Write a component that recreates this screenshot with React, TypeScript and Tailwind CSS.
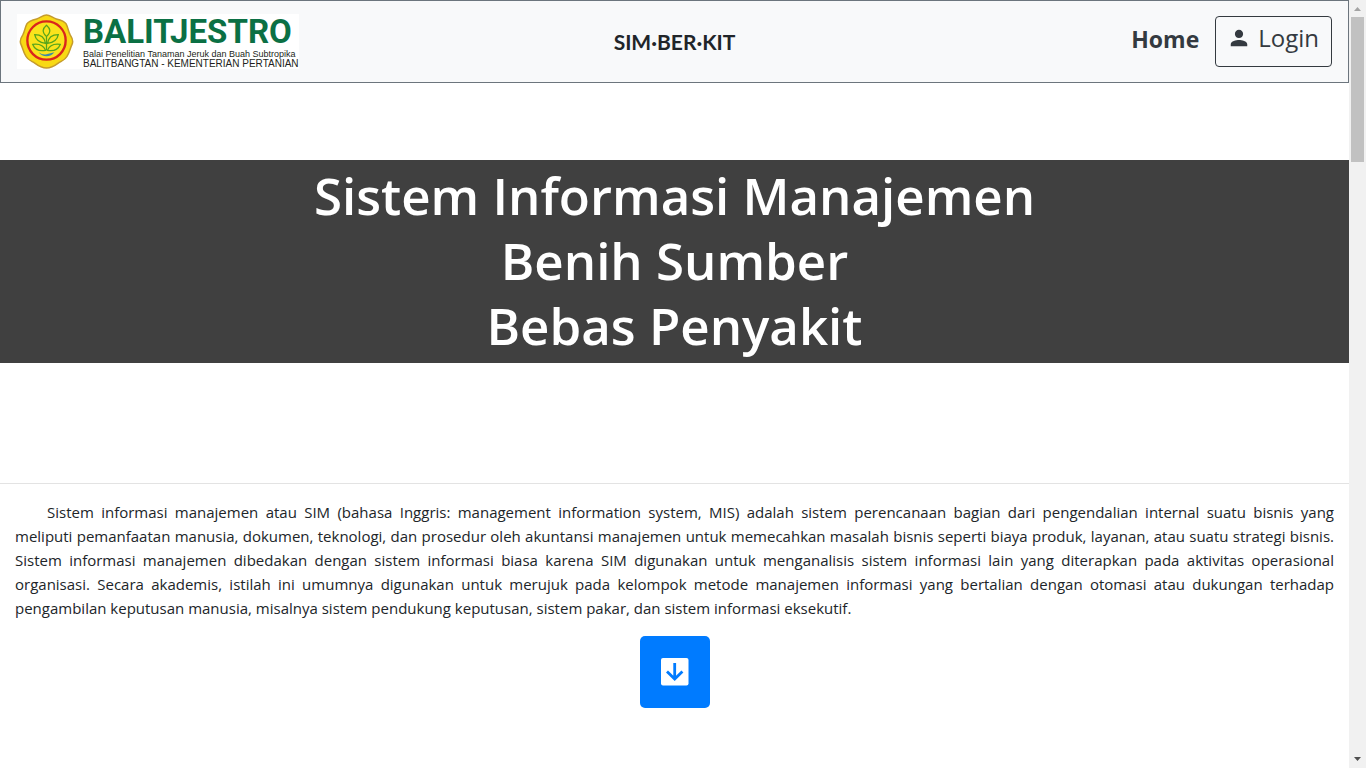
import { IoMdPerson } from "react-icons/io";

function Emblem() {
  return (
    <svg viewBox="0 0 56 56" className="size-[55px] shrink-0" aria-hidden="true">
      <path
        d="M28 1C32 1 34 4 38 5C42 6 46 7 48 10C50 14 50 17 52 21C54 24 56 27 54 31C52 35 52 38 49 43C47 47 43 48 40 50C36 53 32 55 28 55C24 55 20 53 16 50C13 48 9 47 7 43C4 38 4 35 2 31C0 27 2 24 4 21C6 17 6 14 8 10C10 7 14 6 18 5C22 4 24 1 28 1Z"
        fill="#f8d914"
        stroke="#c59b2c"
        strokeWidth="1.5"
      />
      <circle cx="28" cy="27" r="19.5" fill="#fae31c" stroke="#d9251d" strokeWidth="2.4" />
      <g fill="none" stroke="#58a51c" strokeWidth="1.3">
        <path d="M28 37V22M28 23C23 18 24 15 28 11.500C32 15 33 18 28 23Z" />
        <path d="M27 30C26 23 22 21 16 21C17 27 21 29 27 30ZM29 30C30 23 34 21 40 21C39 27 35 29 29 30Z" />
        <path d="M27 37C25 32 21 30 14 31C16 36 21 38 27 37ZM29 37C31 32 35 30 42 31C40 36 35 38 29 37Z" />
      </g>
      <path d="M20 39Q24 42 28 41T36 39Q33 43 28 43T20 39Z" fill="#3d8ba8" />
    </svg>
  );
}

function Navbar() {
  return (
    <header className="grid grid-cols-[1fr_auto_1fr] items-start border border-[#6c757d] bg-[#f8f9fa] px-4 pt-[13px] pb-[13px]">
      <a href="#" className="flex items-start justify-self-start bg-white pl-0.5 font-['Liberation_Sans',sans-serif]">
        <Emblem />
        <span className="ml-[9px] flex flex-col whitespace-nowrap text-[#231f20]">
          <span className="font-[Roboto,'Liberation_Sans',sans-serif] text-[33px] leading-[35px] font-bold text-[#0b7044]">
            BALITJESTRO
          </span>
          <span className="text-[9px] leading-[10px]">Balai Penelitian Tanaman Jeruk dan Buah Subtropika</span>
          <span className="text-[10px] leading-[10px]">BALITBANGTAN - KEMENTERIAN PERTANIAN</span>
        </span>
      </a>
      <span className="pt-[14px] font-[Lato,sans-serif] text-[21px] leading-7 font-bold">SIM·BER·KIT</span>
      <nav className="flex items-start gap-4 justify-self-end pt-[2px] text-2xl text-[#343a40]">
        <a href="#" className="pt-[7px] text-[23px] leading-8 font-bold">
          Home
        </a>
        <button type="button" className="flex h-[51px] items-start gap-2 rounded border border-[#343a40] px-3 pt-[5px] leading-8">
          <IoMdPerson className="mt-[5px] size-[22px]" aria-hidden="true" />
          Login
        </button>
      </nav>
    </header>
  );
}

function ScrollTrack() {
  return (
    <div className="sticky top-0 flex h-screen w-[17px] shrink-0 flex-col items-center bg-[#f1f1f1]" aria-hidden="true">
      <svg viewBox="0 0 17 17" className="h-[17px] w-[17px]">
        <path d="M5 11L8.500 7L12 11Z" fill="#a3a3a3" />
      </svg>
      <div className="h-[145px] w-[13px] bg-[#c1c1c1]" />
      <svg viewBox="0 0 17 17" className="mt-auto h-[17px] w-[17px]">
        <path d="M5 6L8.500 10L12 6Z" fill="#505050" />
      </svg>
    </div>
  );
}

export default function App() {
  return (
    <div className="flex min-h-screen bg-white font-['Open_Sans','Noto_Sans',sans-serif] text-[#212529]">
      <div className="min-w-0 flex-1">
        <Navbar />
        <main>
          <section className="border-b border-[#e3e3e3] pt-[77px] pb-[120px]">
            <h1 className="bg-[#404040] pt-[3px] pb-[5px] text-center text-[51px] leading-[65px] font-semibold text-white">
              Sistem Informasi Manajemen
              <br />
              Benih Sumber
              <br />
              Bebas Penyakit
            </h1>
          </section>
          <section className="px-[15px] pt-4">
            <p className="text-justify indent-8 text-[15px] leading-6">
              Sistem informasi manajemen atau SIM (bahasa Inggris: management information system, MIS) adalah sistem
              perencanaan bagian dari pengendalian internal suatu bisnis yang meliputi&nbsp;pemanfaatan manusia, dokumen,
              teknologi, dan prosedur oleh akuntansi manajemen untuk memecahkan masalah bisnis seperti biaya produk,
              layanan, atau suatu strategi bisnis. Sistem informasi manajemen dibedakan dengan sistem informasi biasa
              karena SIM digunakan untuk menganalisis sistem informasi lain yang diterapkan pada aktivitas operasional
              organisasi. Secara akademis, istilah ini umumnya digunakan untuk merujuk pada kelompok metode manajemen
              informasi yang bertalian dengan otomasi atau dukungan terhadap pengambilan keputusan manusia, misalnya
              sistem pendukung keputusan, sistem pakar, dan sistem informasi eksekutif.
            </p>
            <button
              type="button"
              aria-label="Lanjut ke bawah"
              className="mx-auto mt-4 flex h-[72px] w-[70px] items-center justify-center rounded-[5px] bg-[#007bff]"
            >
              <svg viewBox="0 0 28 28" className="size-7" aria-hidden="true">
                <rect width="27.5" height="27.5" rx="2" fill="#fff" />
                <path d="M13.700 5V21M6 13.500L13.700 21L21.400 13.500" fill="none" stroke="#007bff" strokeWidth="2.800" />
              </svg>
            </button>
          </section>
        </main>
      </div>
      <ScrollTrack />
    </div>
  );
}
